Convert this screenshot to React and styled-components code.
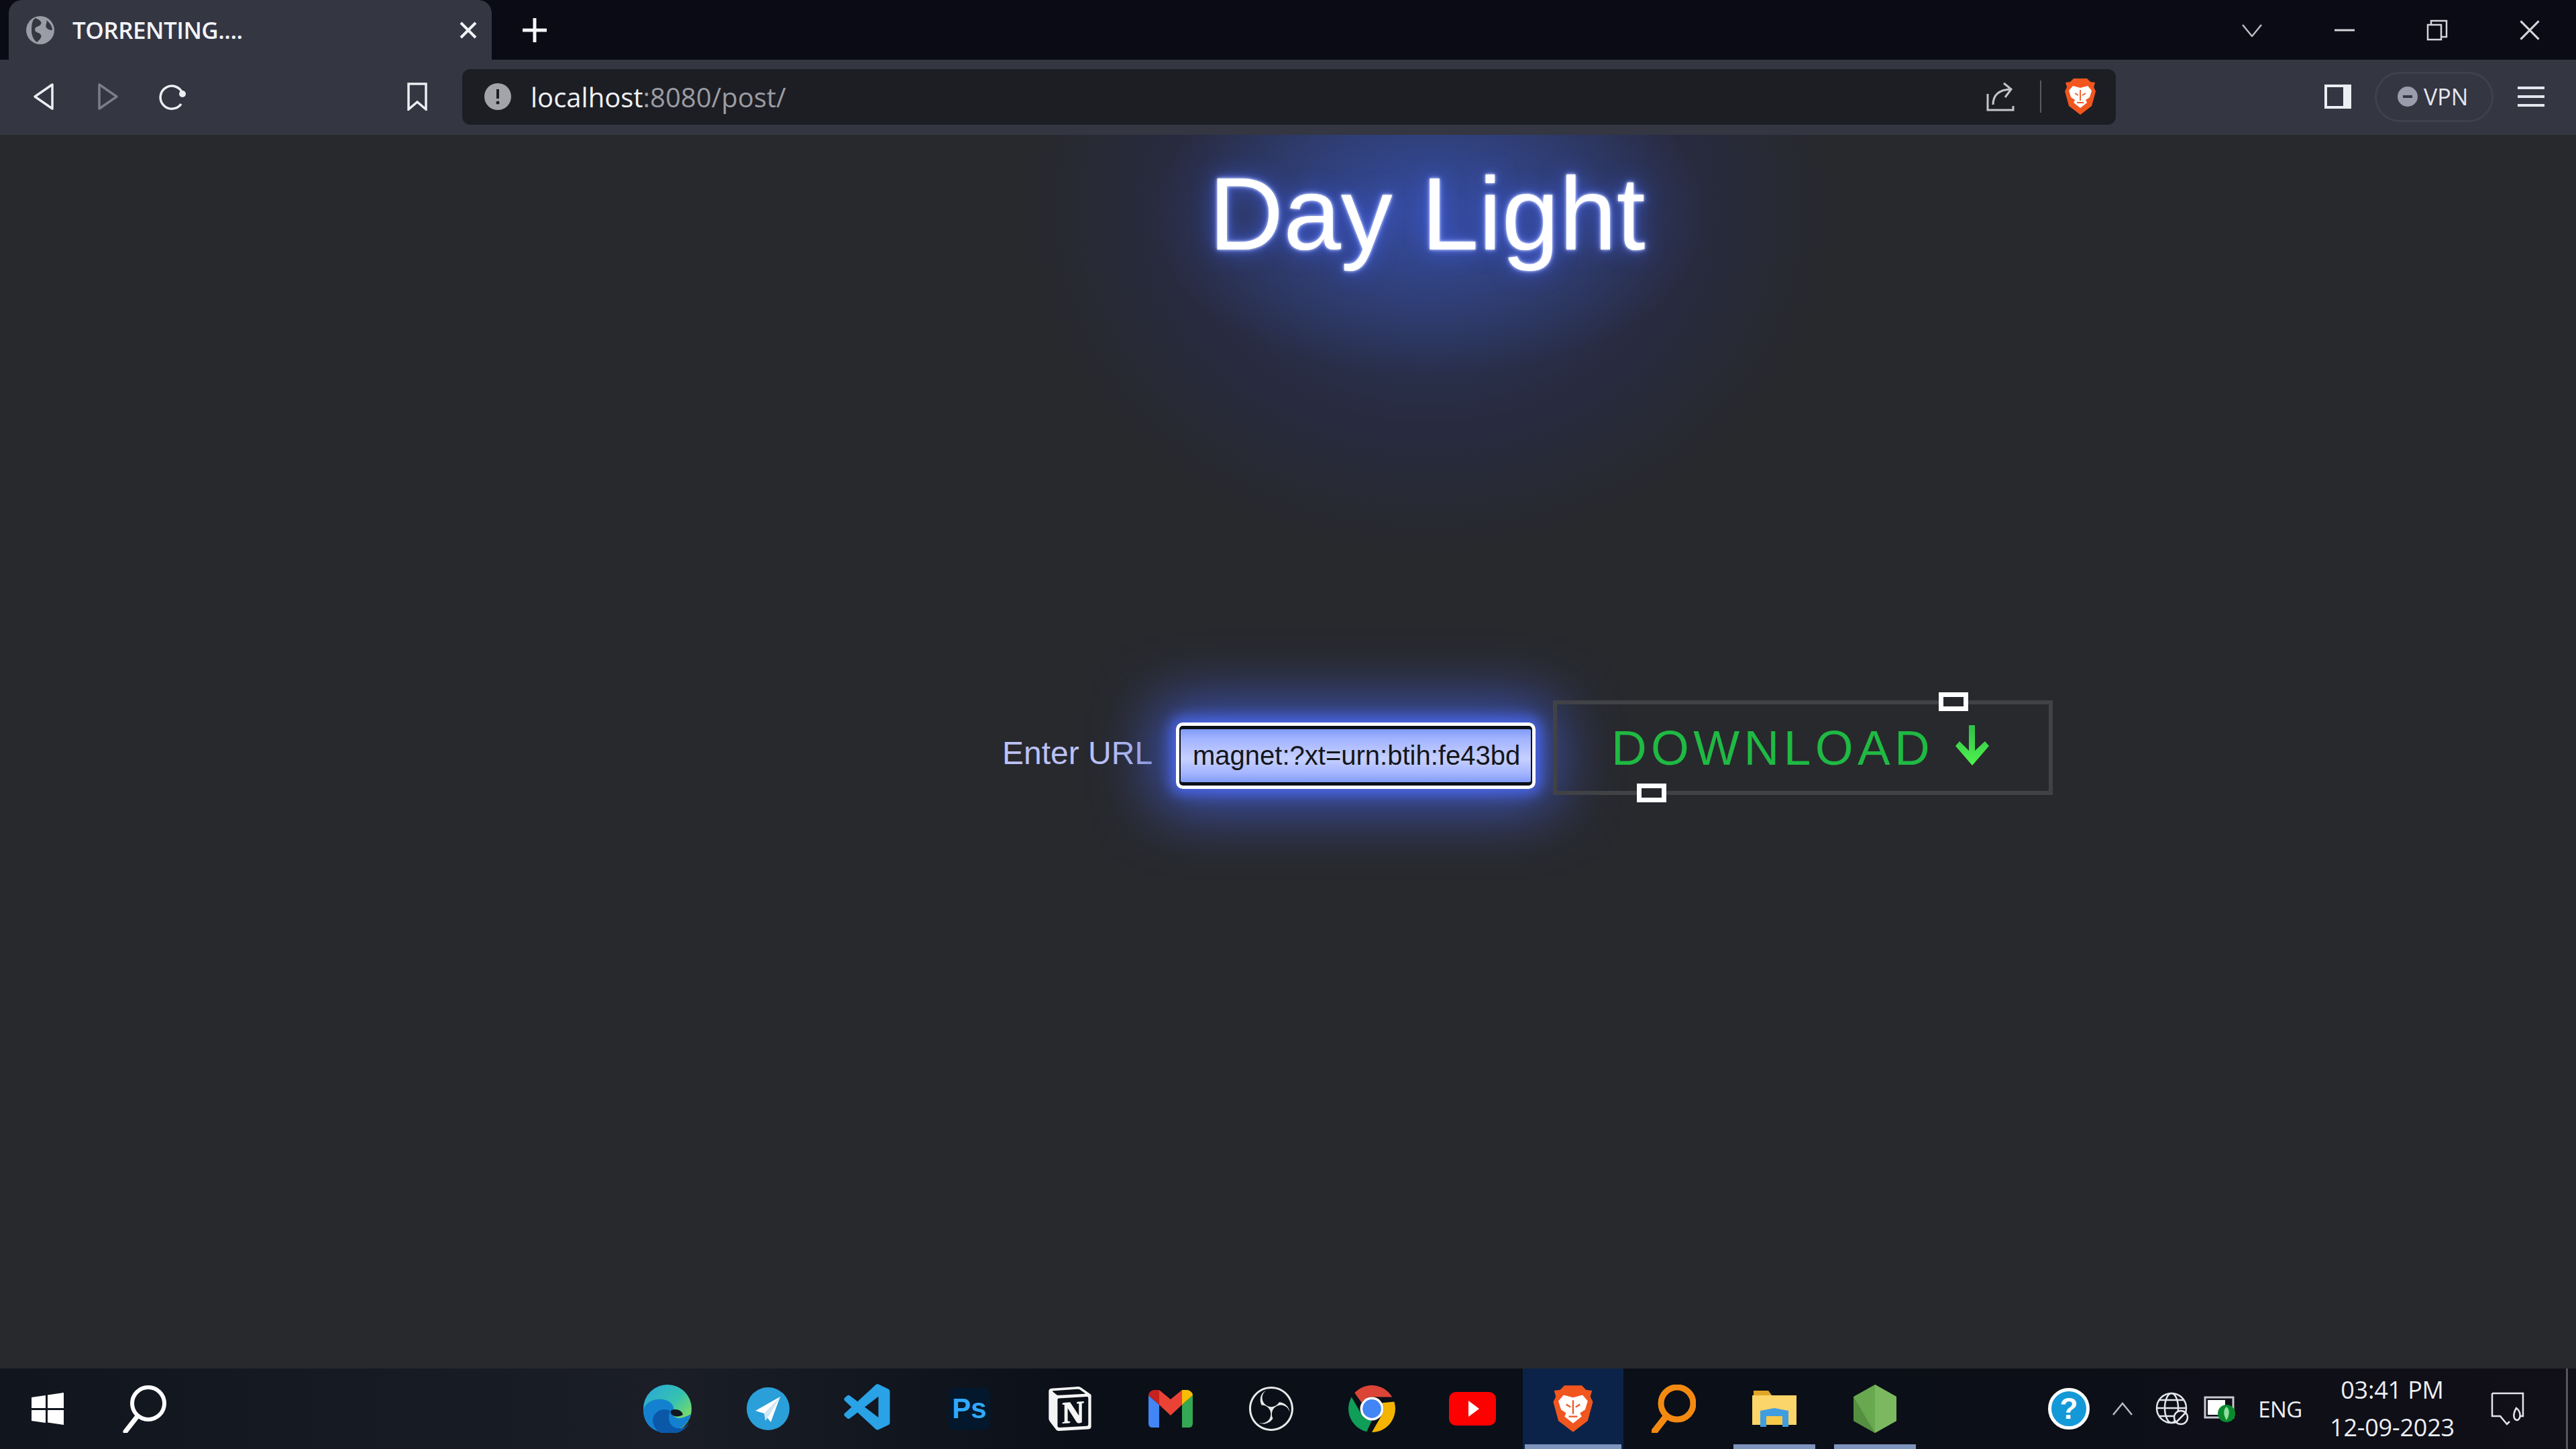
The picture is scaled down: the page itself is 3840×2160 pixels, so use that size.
import React from "react"
import styled, { createGlobalStyle } from "styled-components"
import { SiNotion, SiObsstudio } from "react-icons/si"
import { VscVscode } from "react-icons/vsc"

const GlobalStyle = createGlobalStyle`
  html, body { margin: 0; padding: 0; background: #28292d; }
  * { box-sizing: border-box; }
`

const Screen = styled.div`
  width: 3840px;
  height: 2160px;
  display: flex;
  flex-direction: column;
  overflow: hidden;
  font-family: "Open Sans", sans-serif;
`

/* tab strip */
const TabStrip = styled.div`
  height: 89px;
  flex: none;
  display: flex;
  align-items: stretch;
  padding-left: 13px;
  background: #0a0b14;
`
const Tab = styled.div`
  width: 720px;
  display: flex;
  align-items: center;
  padding: 0 22px 0 26px;
  background: #343642;
  border-radius: 20px 20px 0 0;
  color: #f2f4f8;
`
const TabTitle = styled.span`
  flex: 1;
  margin-left: 27px;
  font-size: 35px;
  font-weight: 600;
  letter-spacing: -0.5px;
`
const NewTab = styled.div`
  width: 128px;
  display: flex;
  align-items: center;
  justify-content: center;
`
const Spacer = styled.div`
  flex: 1;
`
const WinButton = styled.div`
  width: 138px;
  display: flex;
  align-items: center;
  justify-content: center;
  padding-top: 0;
`

/* toolbar */
const Toolbar = styled.div`
  height: 112px;
  flex: none;
  display: flex;
  align-items: center;
  padding: 0 0 2px 17px;
  background: #343642;
`
const ToolButton = styled.div`
  width: ${(p) => p.$w || 96}px;
  margin-left: ${(p) => p.$ml || 0}px;
  display: flex;
  align-items: center;
  justify-content: center;
`
const UrlBar = styled.div`
  width: 2465px;
  height: 83px;
  margin-left: 19px;
  display: flex;
  align-items: center;
  padding-left: 33px;
  background: #1d1e24;
  border-radius: 12px;
`
const UrlText = styled.div`
  flex: 1;
  margin-left: 29px;
  font-size: 40px;
  color: #9a9ca3;
  white-space: nowrap;
`
const UrlHost = styled.span`
  color: #f0f2f5;
`
const UrlDivider = styled.div`
  width: 2px;
  height: 48px;
  margin: 0 34px 0 36px;
  background: #5a5b60;
`
const UrlEnd = styled.div`
  width: 51px;
  display: flex;
  align-items: center;
  justify-content: flex-start;
  margin-right: 26px;
`
const VpnPill = styled.div`
  width: 177px;
  height: 75px;
  margin-left: 7px;
  display: flex;
  align-items: center;
  padding-left: 31px;
  border: 3px solid #3f414e;
  border-radius: 38px;
  color: #e4e6ee;
  font-size: 34px;
`
const VpnDot = styled.div`
  width: 30px;
  height: 30px;
  display: flex;
  align-items: center;
  justify-content: center;
  margin-right: 9px;
  border-radius: 50%;
  background: #9a9cac;

  &::after {
    content: "";
    width: 14px;
    height: 4px;
    background: #343642;
  }
`

/* page: the title's wide halo sits in the background */
const Page = styled.main`
  flex: 1;
  overflow: hidden;
  padding-left: 1494px;
  background:
    radial-gradient(ellipse 420px 240px at 2131px 120px, rgba(62, 88, 200, 0.6), rgba(62, 88, 200, 0) 100%),
    radial-gradient(ellipse 600px 510px at 2131px 110px, rgba(44, 66, 125, 0.75), rgba(40, 46, 92, 0.42) 62%, rgba(40, 41, 60, 0) 100%),
    #28292d;
  font-family: "Liberation Sans", Arial, sans-serif;
`
const Title = styled.h1`
  margin: 33px 0 0 308px;
  font-size: 154px;
  line-height: 170px;
  font-weight: 400;
  color: #fff;
  white-space: nowrap;
  text-shadow:
    0 0 4px #dfe6ff,
    0 0 12px #6d88ff,
    0 0 34px #3f5ce0;
`
const FormRow = styled.div`
  display: flex;
  align-items: flex-start;
  margin-top: 640px;
`
const UrlLabel = styled.label`
  width: 259px;
  margin-top: 52px;
  font-size: 48px;
  line-height: 54px;
  color: #bcc1f6;
`
const UrlInput = styled.input`
  width: 536px;
  height: 99px;
  margin-top: 33px;
  padding: 0 14px 0 20px;
  border: 5px solid #fff;
  border-radius: 10px;
  outline: none;
  background: linear-gradient(180deg, #7592f7 0%, #a3b4ff 22%, #c6d0ff 55%, #a3b4ff 80%, #7592f3 100%);
  box-shadow:
    inset 0 5px 0 #0b1018,
    inset 0 -5px 0 #0b1018,
    inset 0 0 0 2px #0b1018,
    0 0 20px 8px #4a66e8,
    0 0 90px 30px #3f56b8;
  font-family: "Liberation Sans", Arial, sans-serif;
  font-size: 40px;
  color: #14161c;
`
const DownloadButton = styled.button`
  position: relative;
  width: 745px;
  height: 141px;
  margin-left: 26px;
  display: flex;
  align-items: center;
  padding: 0 0 0 81px;
  border: 6px solid #414246;
  background: transparent;
  color: #1fb943;
  font-family: "Liberation Sans", Arial, sans-serif;
  font-size: 73px;
  letter-spacing: 6.4px;
`
const ButtonArrow = styled.span`
  display: flex;
  margin-left: 30px;
  margin-top: -8px;
`
const Handle = styled.span`
  position: absolute;
  width: 44px;
  height: 28px;
  border: 7px solid #fff;
  background: #26272b;
  left: ${(p) => p.$left}px;
  top: ${(p) => p.$top}px;
`

/* taskbar */
const Taskbar = styled.footer`
  height: 120px;
  flex: none;
  display: flex;
  align-items: stretch;
  background: linear-gradient(90deg, #10151e 0%, #1b1e27 26%, #0a0f18 42%, #0a0f18 66%, #110f18 100%);
  color: #eceef2;
`
const SystemCell = styled.div`
  width: ${(p) => p.$w}px;
  display: flex;
  align-items: center;
  justify-content: center;
`
const AppIcons = styled.div`
  display: flex;
  margin-left: 630px;
  margin-right: 174px;
`
const AppCell = styled.div`
  position: relative;
  width: 150px;
  display: flex;
  align-items: center;
  justify-content: center;
  background: ${(p) => (p.$active ? "#0b2348" : "transparent")};

  &::after {
    content: "";
    display: ${(p) => (p.$active || p.$running ? "block" : "none")};
    position: absolute;
    left: ${(p) => (p.$active ? "3px" : "14px")};
    right: ${(p) => (p.$active ? "3px" : "14px")};
    bottom: 0;
    height: 7px;
    background: #7d94bd;
  }
`
const LangText = styled.span`
  font-size: 33px;
  letter-spacing: -0.5px;
`
const Clock = styled.div`
  display: flex;
  flex-direction: column;
  align-items: center;
  gap: 16px;
  font-size: 36px;
  line-height: 40px;
  letter-spacing: -0.2px;
`
const EdgeLine = styled.div`
  width: 3px;
  margin-left: 29px;
  background: #55565c;
`
const PsBox = styled.div`
  width: 62px;
  height: 62px;
  display: flex;
  align-items: center;
  justify-content: center;
  background: #03182c;
  border-radius: 8px;
  color: #31a8ff;
  font-family: "Liberation Sans", Arial, sans-serif;
  font-size: 42px;
  font-weight: 700;
`
const NotionBox = styled.div`
  display: flex;
  color: #f4f4f4;
`
const HelpBadge = styled.div`
  width: 62px;
  height: 62px;
  display: flex;
  align-items: center;
  justify-content: center;
  border: 5px solid #fff;
  border-radius: 50%;
  background: #1399d8;
  color: #fff;
  font-family: "Liberation Sans", Arial, sans-serif;
  font-size: 44px;
  font-weight: 700;
`

/* browser glyphs */
const Globe = () => (
  <svg width="42" height="42" viewBox="0 0 42 42">
    <circle cx="21" cy="21" r="21" fill="#9a9ca6" />
    <path d="M14 3c6 3 10 5 8 9s-9 3-9 8 7 4 9 8-3 8-6 11c-3-2-8-8-8-17S9 5 14 3zM30 6c4 3 9 8 9 15-3 0-7-1-9-4-2-4 2-7 0-11z" fill="#343642" />
  </svg>
)
const Close = ({ size = 26, w = 4, color = "#f2f4f8" }) => (
  <svg width={size} height={size} viewBox="0 0 26 26">
    <path d="M2 2l22 22M24 2L2 24" stroke={color} strokeWidth={w} fill="none" />
  </svg>
)
const Plus = () => (
  <svg width="36" height="36" viewBox="0 0 36 36">
    <path d="M18 0v36M0 18h36" stroke="#f5f6fa" strokeWidth="5" />
  </svg>
)
const Chevron = ({ up }) => (
  <svg width="32" height="20" viewBox="0 0 32 20">
    <path d={up ? "M2 19L16 2l14 17" : "M2 2l14 17L30 2"} stroke="#b9bbc2" strokeWidth="2.5" fill="none" />
  </svg>
)
const Minimize = () => (
  <svg width="30" height="4" viewBox="0 0 30 4"><path d="M0 2h30" stroke="#d4d5da" strokeWidth="3" /></svg>
)
const Restore = () => (
  <svg width="32" height="32" viewBox="0 0 32 32">
    <path d="M2 8h20v22H2zM7 8V2h23v24h-8" stroke="#d4d5da" strokeWidth="2.5" fill="none" />
  </svg>
)
const Back = ({ flip, color = "#eceef2" }) => (
  <svg width="32" height="42" viewBox="0 0 32 42" style={flip ? { transform: "scaleX(-1)" } : undefined}>
    <path d="M29 3L3 21l26 18z" stroke={color} strokeWidth="3.5" strokeLinejoin="round" fill="none" />
  </svg>
)
const Reload = () => (
  <svg width="42" height="42" viewBox="0 0 42 42">
    <path d="M34 32a17 17 0 1 1 2-16" stroke="#eceef2" strokeWidth="3.5" fill="none" />
    <circle cx="36" cy="17" r="5" fill="#eceef2" />
  </svg>
)
const Bookmark = () => (
  <svg width="32" height="42" viewBox="0 0 32 42">
    <path d="M3 2h26v38L16 29 3 40z" stroke="#eceef2" strokeWidth="3.5" fill="none" />
  </svg>
)
const Info = () => (
  <svg width="40" height="40" viewBox="0 0 40 40">
    <circle cx="20" cy="20" r="20" fill="#a2a4aa" />
    <path d="M20 9v14" stroke="#1d1e24" strokeWidth="4" />
    <circle cx="20" cy="29" r="2.5" fill="#1d1e24" />
  </svg>
)
const Share = () => (
  <svg width="44" height="44" viewBox="0 0 44 44">
    <path d="M2 18v24h38v-6M10 34c0-14 8-22 26-23M26 2l11 9-9 12" stroke="#c4c5ca" strokeWidth="3" fill="none" />
  </svg>
)
const SidePanel = () => (
  <svg width="40" height="36" viewBox="0 0 40 36">
    <path d="M2 2h36v32H2z" stroke="#eceef2" strokeWidth="4" fill="none" />
    <path d="M28 2h10v32H28z" fill="#eceef2" />
  </svg>
)
const Menu = () => (
  <svg width="40" height="32" viewBox="0 0 40 32">
    <path d="M0 3h40M0 16h40M0 29h40" stroke="#e4e6ee" strokeWidth="4" />
  </svg>
)
const Brave = ({ size = 56 }) => (
  <svg width={size * 0.86} height={size} viewBox="0 0 48 56">
    <path d="M14 1h20l5 5 7 1-2 7 3 6-6 22-17 13L7 42 1 20l3-6-2-7 7-1z" fill="#f1561f" />
    <path d="M13 12l11 3 11-3 6 7-3 10-6 4 2 4-10 8-10-8 2-4-6-4-3-10z" fill="#fff" />
    <path d="M24 18v16M16 23l5 3M32 23l-5 3M19 37h10" stroke="#f1561f" strokeWidth="1.800" fill="none" />
  </svg>
)

/* taskbar glyphs */
const Windows = () => (
  <svg width="48" height="48" viewBox="0 0 48 48">
    <path d="M0 7l21-3v19H0zM24 3.500L48 0v23H24zM0 26h21v19L0 42zM24 26h24v22l-24-3.500z" fill="#fff" />
  </svg>
)
const SearchGlass = ({ color = "#fff", w = 6 }) => (
  <svg width="66" height="72" viewBox="0 0 66 72">
    <circle cx="38" cy="28" r="24" stroke={color} strokeWidth={w} fill="none" />
    <path d="M22 47L4 70" stroke={color} strokeWidth={w + 1} strokeLinecap="round" />
  </svg>
)
const Edge = () => (
  <svg width="72" height="72" viewBox="0 0 72 72">
    <defs>
      <linearGradient id="edgeTop" x1="0.1" y1="0" x2="0.9" y2="0.8">
        <stop offset="0" stopColor="#2aa8d8" />
        <stop offset="0.55" stopColor="#35c2b0" />
        <stop offset="1" stopColor="#86e05a" />
      </linearGradient>
    </defs>
    <circle cx="36" cy="36" r="36" fill="url(#edgeTop)" />
    <path d="M0 38C3 24 22 18 36 24c8 4 11 11 9 18-2 8 8 12 26 2-4 16-20 28-35 28C14 72 0 58 0 38z" fill="#1481d0" />
    <path d="M26 72c-12-6-16-22-7-30 6-6 15-6 21-3-4 10-2 21 7 25 8 3 16 1 22-8-5 11-17 18-31 18-4 0-8-1-12-2z" fill="#0b58a8" />
    <path d="M42 38c8-3 16 1 17 7-6 4-15 3-18-2-1-2 0-4 1-5z" fill="#12161f" />
  </svg>
)
const Telegram = () => (
  <svg width="64" height="66" viewBox="0 0 64 66">
    <circle cx="32" cy="33" r="32" fill="#2a9fd9" />
    <path d="M50 15L13 36l13 4 10 13z" fill="#fff" />
    <path d="M50 15L26 40l2 11 5-7z" fill="#cfe6f3" />
  </svg>
)
const Gmail = () => (
  <svg width="66" height="56" viewBox="0 0 66 56">
    <path d="M0 8v42c0 3 2 6 5 6h11V22z" fill="#4285f4" />
    <path d="M50 22v34h11c3 0 5-3 5-6V8z" fill="#34a853" />
    <path d="M0 8l16 14V0C8-2 0 2 0 8z" fill="#c5221f" />
    <path d="M16 0v22l17 16 17-16V0L33 14z" fill="#ea4335" />
    <path d="M50 0v22L66 8c0-6-8-10-16-8z" fill="#fbbc04" />
  </svg>
)
const Chrome = () => {
  const blade = "M11 13A34 34 0 0 1 65.400 19H36A17 17 0 0 0 21.300 27.500Z"
  return (
    <svg width="72" height="72" viewBox="1 1 70 70">
      <path d={blade} fill="#db4437" />
      <path d={blade} fill="#f4b400" transform="rotate(120 36 36)" />
      <path d={blade} fill="#0f9d58" transform="rotate(240 36 36)" />
      <circle cx="36" cy="36" r="17" fill="#fff" />
      <circle cx="36" cy="36" r="13.500" fill="#4285f4" />
    </svg>
  )
}
const YouTube = () => (
  <svg width="70" height="50" viewBox="0 0 70 50">
    <rect width="70" height="50" rx="10" fill="#f00" />
    <path d="M29 13l16 12-16 12z" fill="#fff" />
  </svg>
)
const Folder = () => (
  <svg width="66" height="54" viewBox="0 0 66 54">
    <path d="M2 0h22l6 8H2z" fill="#e0a526" />
    <path d="M0 7h66v44H0z" fill="#fbd569" />
    <path d="M12 30L33 26l21 4v24h-9V38H21v16h-9z" fill="#3f9de0" />
    <path d="M21 38h24v13H21z" fill="#f7c948" />
  </svg>
)
const NodeHex = () => (
  <svg width="64" height="72" viewBox="0 0 64 72">
    <path d="M32 0l32 18v36L32 72 0 54V18z" fill="#68a94f" />
    <path d="M32 0l32 18v36L32 72z" fill="#7cb85f" />
    <path d="M0 18l32 54-32-18z" fill="#558f40" />
  </svg>
)
const TrayGlobe = () => (
  <svg width="50" height="50" viewBox="0 0 50 50">
    <g stroke="#e4e6ec" strokeWidth="2.5" fill="none">
      <circle cx="24" cy="24" r="22" />
      <ellipse cx="24" cy="24" rx="10" ry="22" />
      <path d="M2 24h44M6 12h36M6 36h22" />
      <circle cx="38" cy="38" r="10" fill="#121019" />
      <path d="M31 45l14-14" />
    </g>
  </svg>
)
const TrayBattery = () => (
  <svg width="48" height="42" viewBox="0 0 48 42">
    <path d="M2 4h42v30H2z" stroke="#c8cad0" strokeWidth="3" fill="none" />
    <path d="M6 8h26v22H6z" fill="#fff" />
    <circle cx="34" cy="28" r="13" fill="#0b8a2c" />
    <path d="M34 18c5 4 5 12 0 20-5-8-5-16 0-20z" fill="#8fe0a0" />
  </svg>
)
const Notifications = () => (
  <svg width="50" height="50" viewBox="0 0 50 50">
    <path d="M2 2h46v34h-4M2 2v34h12l10 12 4-4" stroke="#e4e6ec" strokeWidth="2.5" fill="none" />
    <path d="M38 24c6 4 8 14 2 18-6 0-8-8-2-18z" stroke="#e4e6ec" strokeWidth="2.5" fill="none" />
  </svg>
)
const DownArrow = () => (
  <svg width="54" height="60" viewBox="0 0 54 60">
    <defs>
      <linearGradient id="arrowFill" x1="0" y1="0" x2="0" y2="1">
        <stop offset="0" stopColor="#2fbf49" />
        <stop offset="1" stopColor="#50f44f" />
      </linearGradient>
    </defs>
    <path d="M22 0h9v38l15-14 6 7-25 29L2 31l6-7 14 14z" fill="url(#arrowFill)" />
  </svg>
)

const App = () => {
  return (
    <Screen>
      <GlobalStyle />
      <TabStrip>
        <Tab>
          <Globe />
          <TabTitle>TORRENTING....</TabTitle>
          <Close />
        </Tab>
        <NewTab>
          <Plus />
        </NewTab>
        <Spacer />
        <WinButton><Chevron /></WinButton>
        <WinButton><Minimize /></WinButton>
        <WinButton><Restore /></WinButton>
        <WinButton><Close size={32} w={2.5} color="#d4d5da" /></WinButton>
      </TabStrip>

      <Toolbar>
        <ToolButton><Back /></ToolButton>
        <ToolButton><Back flip color="#7b7d88" /></ToolButton>
        <ToolButton><Reload /></ToolButton>
        <ToolButton $ml={269}><Bookmark /></ToolButton>
        <UrlBar>
          <Info />
          <UrlText><UrlHost>localhost</UrlHost>:8080/post/</UrlText>
          <Share />
          <UrlDivider />
          <UrlEnd><Brave /></UrlEnd>
        </UrlBar>
        <ToolButton $w={96} $ml={283}><SidePanel /></ToolButton>
        <VpnPill>
          <VpnDot />
          VPN
        </VpnPill>
        <ToolButton $w={112}><Menu /></ToolButton>
      </Toolbar>

      <Page>
        <Title>Day Light</Title>
        <FormRow>
          <UrlLabel>Enter URL</UrlLabel>
          <UrlInput readOnly value="magnet:?xt=urn:btih:fe43bd" />
          <DownloadButton>
            DOWNLOAD
            <ButtonArrow><DownArrow /></ButtonArrow>
            <Handle $left={569} $top={-18} />
            <Handle $left={119} $top={118} />
          </DownloadButton>
        </FormRow>
      </Page>

      <Taskbar>
        <SystemCell $w={142}><Windows /></SystemCell>
        <SystemCell $w={148}><SearchGlass /></SystemCell>
        <AppIcons>
          <AppCell><Edge /></AppCell>
          <AppCell><Telegram /></AppCell>
          <AppCell><VscVscode size={84} color="#2aa2e6" /></AppCell>
          <AppCell><PsBox>Ps</PsBox></AppCell>
          <AppCell><NotionBox><SiNotion size={66} /></NotionBox></AppCell>
          <AppCell><Gmail /></AppCell>
          <AppCell><SiObsstudio size={66} color="#e8e8e8" /></AppCell>
          <AppCell><Chrome /></AppCell>
          <AppCell><YouTube /></AppCell>
          <AppCell $active><Brave size={72} /></AppCell>
          <AppCell><SearchGlass color="#f28a12" w={9} /></AppCell>
          <AppCell $running><Folder /></AppCell>
          <AppCell $running><NodeHex /></AppCell>
        </AppIcons>
        <SystemCell $w={80}><HelpBadge>?</HelpBadge></SystemCell>
        <SystemCell $w={80}><Chevron up /></SystemCell>
        <SystemCell $w={68}><TrayGlobe /></SystemCell>
        <SystemCell $w={74}><TrayBattery /></SystemCell>
        <SystemCell $w={106}><LangText>ENG</LangText></SystemCell>
        <SystemCell $w={228}>
          <Clock>
            <span>03:41 PM</span>
            <span>12-09-2023</span>
          </Clock>
        </SystemCell>
        <SystemCell $w={116}><Notifications /></SystemCell>
        <EdgeLine />
      </Taskbar>
    </Screen>
  )
}

export default App
